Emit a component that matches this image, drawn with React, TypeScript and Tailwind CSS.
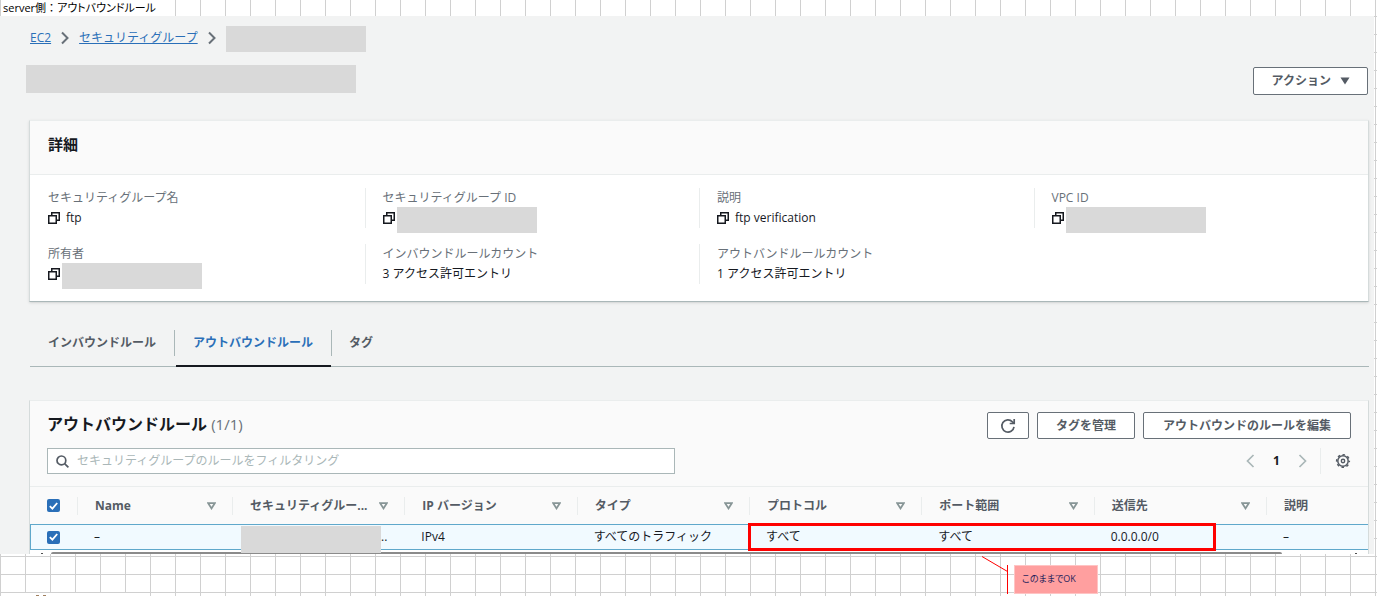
import type { ReactNode } from 'react';

type Detail = {
  label: string;
  value?: string;
  copyable?: boolean;
};

const details: Detail[] = [
  { label: 'セキュリティグループ名', value: 'ftp', copyable: true },
  { label: 'セキュリティグループ ID', copyable: true },
  { label: '説明', value: 'ftp verification', copyable: true },
  { label: 'VPC ID', copyable: true },
  { label: '所有者', copyable: true },
  { label: 'インバウンドルールカウント', value: '3 アクセス許可エントリ' },
  { label: 'アウトバンドルールカウント', value: '1 アクセス許可エントリ' },
];

const columns = [
  { title: 'Name', width: 'w-[155px]' },
  { title: 'セキュリティグルー...', width: '' },
  { title: 'IP バージョン', width: '' },
  { title: 'タイプ', width: '' },
  { title: 'プロトコル', width: '' },
  { title: 'ポート範囲', width: '' },
  { title: '送信先', width: '' },
];

function CopyIcon() {
  return (
    <svg width="12" height="12" viewBox="0 0 12 12" fill="none" stroke="#16191f" strokeWidth="1.5" aria-hidden="true">
      <path d="M.75 3.75h7.5v7.5H.75z" />
      <path d="M3.75 3.5V.75h7.5v7.5H8.5" />
    </svg>
  );
}

function BreadcrumbArrow() {
  return (
    <svg width="8" height="14" viewBox="0 0 8 14" fill="none" stroke="#687078" strokeWidth="2" aria-hidden="true">
      <path d="M1 1.5 6.5 7 1 12.5" />
    </svg>
  );
}

function SortIcon() {
  return (
    <svg width="9" height="8" viewBox="0 0 9 8" fill="none" stroke="#879596" strokeWidth="1.8" aria-hidden="true">
      <path d="M1.2 1.2h6.6L4.5 6.4z" />
    </svg>
  );
}

// Grey block drawn in place of a hidden value
function Redacted({ className = 'h-[26px] w-[140px]' }: { className?: string }) {
  return <span className={`block shrink-0 bg-[#d9d9d9] ${className}`} />;
}

function Checkbox({ label }: { label: string }) {
  return (
    <span className="grid size-[13px] place-items-center">
      <input
        type="checkbox"
        defaultChecked
        aria-label={label}
        className="col-start-1 row-start-1 size-[13px] appearance-none rounded-xs bg-[#2a6fb8]"
      />
      <svg
        className="pointer-events-none col-start-1 row-start-1"
        width="9"
        height="8"
        viewBox="0 0 9 8"
        fill="none"
        stroke="#fff"
        strokeWidth="1.8"
        aria-hidden="true"
      >
        <path d="M.8 4.2 3.4 6.6 8.2 1" />
      </svg>
    </span>
  );
}

function Button({ children, className = 'h-[27px]', label }: { children: ReactNode; className?: string; label?: string }) {
  return (
    <button
      type="button"
      aria-label={label}
      className={`flex items-center justify-center rounded-xs border border-[#687078] bg-white font-bold text-[#545b64] ${className}`}
    >
      {children}
    </button>
  );
}

function DetailsCard() {
  return (
    <section className="mt-[25px] border-x border-t border-b border-x-[#d5dbdb] border-t-[#eaeded] border-b-[#aab7b8] bg-white shadow-sm">
      <div className="flex h-[54px] items-center border-b border-[#eaeded] bg-[#fafafa] pr-4 pb-2 pl-[18px]">
        <h2 className="text-[15px] leading-6 font-bold">詳細</h2>
      </div>
      <dl className="grid grid-cols-4 gap-y-4 pt-[13px] pb-[17px]">
        {details.map((detail, index) => (
          <div
            key={detail.label}
            className={`h-10 border-l pl-[17px] leading-5 ${index % 4 === 0 ? 'border-transparent' : 'border-[#eaeded]'}`}
          >
            <dt className="text-[#687078]">{detail.label}</dt>
            <dd className="flex h-5 items-start">
              {detail.copyable && (
                <button type="button" aria-label={`${detail.label}をコピー`} className="mt-1 mr-0.5 shrink-0">
                  <CopyIcon />
                </button>
              )}
              {detail.value ? (
                <span className={detail.copyable ? 'pl-1' : ''}>{detail.value}</span>
              ) : (
                <Redacted className="-mt-px h-[26px] w-[140px]" />
              )}
            </dd>
          </div>
        ))}
      </dl>
    </section>
  );
}

function Tabs() {
  return (
    <div role="tablist" className="mt-[26px] ml-px flex h-[39px] items-end border-b border-[#aab7b8] font-bold text-[#545b64]">
      <button type="button" role="tab" aria-selected="false" className="mb-2.5 h-[26px] border-r border-[#aab7b8] px-[18px]">
        インバウンドルール
      </button>
      <button
        type="button"
        role="tab"
        aria-selected="true"
        className="-mb-px ml-px border-b-2 border-[#16191f] pb-[9px] text-[#2a6fb8]"
      >
        <span className="flex h-[26px] items-center pr-[18px] pl-[17px]">アウトバウンドルール</span>
      </button>
      <button type="button" role="tab" aria-selected="false" className="mb-2.5 h-[26px] border-l border-[#aab7b8] px-[17px]">
        タグ
      </button>
    </div>
  );
}

function RulesTable() {
  const cell = 'border-y border-[#5fa8cb] bg-[#f1faff] pl-[17px]';
  return (
    <table className="w-full table-fixed border-separate border-spacing-0 text-left whitespace-nowrap">
      <thead>
        <tr className="h-[38px] bg-[#fafafa] text-[#545b64]">
          <th className="w-[47px] border-t border-[#eaeded] pl-[17px]">
            <Checkbox label="すべて選択" />
          </th>
          {columns.map((column) => (
            <th key={column.title} className={`border-t border-[#eaeded] p-0 ${column.width}`}>
              <div className="flex h-[18px] items-center justify-between border-l border-[#eaeded] pr-4 pl-[17px]">
                <span>{column.title}</span>
                <button type="button" aria-label={`${column.title}で並べ替え`}>
                  <SortIcon />
                </button>
              </div>
            </th>
          ))}
          <th className="w-[102px] border-t border-[#eaeded] p-0">
            <div className="flex h-[18px] items-center border-l border-[#eaeded] pl-[17px]">説明</div>
          </th>
        </tr>
      </thead>
      <tbody>
        <tr className="h-[26px]">
          <td className="border-y border-l border-[#5fa8cb] bg-[#f1faff] pl-4">
            <Checkbox label="ルールを選択" />
          </td>
          <td className={cell}>–</td>
          <td className="relative border-y border-[#5fa8cb] bg-[#f1faff] pl-[149px]">
            <span className="absolute top-px left-[9px]">
              <Redacted className="h-[27px] w-[140px]" />
            </span>
            ..
          </td>
          <td className={cell}>IPv4</td>
          <td className={cell}>すべてのトラフィック</td>
          <td className={`relative ${cell}`}>
            すべて
            {/* Highlight around protocol, port range and destination */}
            <span className="pointer-events-none absolute -top-0.5 -left-px z-10 h-7 w-[468px] border-3 border-[#fe0000]" />
          </td>
          <td className={cell}>すべて</td>
          <td className={cell}>0.0.0.0/0</td>
          <td className={cell}>–</td>
        </tr>
      </tbody>
    </table>
  );
}

function RulesCard() {
  return (
    <section className="mt-[33px] border-x border-t border-x-[#d5dbdb] border-t-[#eaeded] bg-white">
      <div className="flex flex-col gap-[9px] bg-[#fafafa] pt-[11px] pr-[17px] pb-3 pl-[17px]">
        <div className="flex items-start justify-between">
          <h2 className="text-[16px] leading-6 font-bold">
            アウトバウンドルール <span className="text-[15px] font-normal text-[#687078]">(1/1)</span>
          </h2>
          <div className="flex gap-2">
            <Button label="更新" className="h-[27px] w-[42px]">
              <svg width="16" height="16" viewBox="0 0 16 16" fill="none" stroke="#545b64" strokeWidth="1.7" aria-hidden="true">
                <path d="M14 8.800A6.100 6.100 0 1 1 12.400 3.800L14 5.200" />
                <path d="M14.200 1v4.500H9.700" />
              </svg>
            </Button>
            <Button className="h-[27px] px-[18px]">タグを管理</Button>
            <Button className="h-[27px] px-[19px]">アウトバウンドのルールを編集</Button>
          </div>
        </div>
        <div className="flex items-center justify-between">
          <label className="flex h-[26px] w-[628px] items-center gap-2 border border-[#aab7b8] bg-white pl-2">
            <svg width="13" height="13" viewBox="0 0 13 13" fill="none" stroke="#545b64" strokeWidth="1.7" aria-hidden="true">
              <circle cx="5.4" cy="5.4" r="4.4" />
              <path d="m8.6 8.6 3.8 3.8" />
            </svg>
            <input
              type="text"
              aria-label="セキュリティグループのルールをフィルタリング"
              placeholder="セキュリティグループのルールをフィルタリング"
              className="min-w-0 flex-1 outline-none placeholder:text-[#aab7b8]"
            />
          </label>
          <div className="flex items-center">
            <button type="button" aria-label="前のページ">
              <svg width="9" height="14" viewBox="0 0 9 14" fill="none" stroke="#aab7b8" strokeWidth="1.7" aria-hidden="true">
                <path d="M7.5 1 1.5 7l6 6" />
              </svg>
            </button>
            <button type="button" className="w-[43px] text-center font-bold">
              1
            </button>
            <button type="button" aria-label="次のページ">
              <svg width="9" height="14" viewBox="0 0 9 14" fill="none" stroke="#aab7b8" strokeWidth="1.7" aria-hidden="true">
                <path d="m1.5 1 6 6-6 6" />
              </svg>
            </button>
            <button type="button" aria-label="設定" className="ml-[13px] flex h-[26px] items-center border-l border-[#eaeded] pl-3.5">
              <svg width="16" height="16" viewBox="0 0 16 16" fill="none" stroke="#545b64" aria-hidden="true">
                <circle cx="8" cy="8" r="5.2" strokeWidth="1.5" />
                <circle cx="8" cy="8" r="6.4" strokeWidth="1.4" strokeDasharray="2.51 2.516" strokeDashoffset="1.25" />
                <circle cx="8" cy="8" r="1.7" strokeWidth="1.4" />
              </svg>
            </button>
          </div>
        </div>
      </div>
      <RulesTable />
      {/* Horizontal scrollbar cut off at the edge of the panel */}
      <div className="flex h-1 items-end justify-between pr-[11px] pl-[11px]">
        <span className="h-px w-0.5 bg-[#505050]" />
        <span className="mr-[73px] ml-2 h-0.5 flex-1 rounded-t-xs bg-[#8b8b8b]" />
        <span className="h-px w-0.5 bg-[#505050]" />
      </div>
    </section>
  );
}

export default function App() {
  return (
    <div className="relative min-h-screen overflow-hidden bg-white bg-[linear-gradient(to_right,#d0d0d0_1px,transparent_1px),linear-gradient(to_bottom,#d0d0d0_1px,transparent_1px)] bg-[size:25px_18px] bg-[position:0_-2px] font-['Open_Sans','Noto_Sans_CJK_JP',sans-serif] text-xs text-[#16191f]">
      <div className="flex h-4 pl-px">
        <p className="w-[174px] bg-white pl-0.5 text-[11px] leading-[15px] whitespace-nowrap text-black">
          server側：
          <span className="[font-feature-settings:'palt']">アウトバウンドルール</span>
        </p>
      </div>

      <main className="mr-[3px] bg-[#f2f3f3] pt-2.5">
        <nav aria-label="パンくずリスト" className="flex h-[26px] items-center pb-0.5 pl-[30px] text-[#2a6fb8]">
          <a href="#ec2" className="underline">
            EC2
          </a>
          <span className="mx-2.5">
            <BreadcrumbArrow />
          </span>
          <a href="#security-groups" className="underline">
            セキュリティグループ
          </a>
          <span className="mx-2.5">
            <BreadcrumbArrow />
          </span>
          <Redacted className="-mb-0.5 h-[26px] w-[140px]" />
        </nav>

        <div className="mt-[13px] flex items-start justify-between pr-1.5 pl-[26px]">
          <Redacted className="h-7 w-[330px]" />
          <Button className="mt-0.5 h-7 gap-2 pr-4 pl-[18px]">
            アクション
            <svg width="12" height="8" viewBox="0 0 12 8" fill="#545b64" aria-hidden="true">
              <path d="M1.500.5h9L6 7.500z" />
            </svg>
          </Button>
        </div>

        <div className="pr-[5px] pl-[29px]">
          <DetailsCard />
          <Tabs />
          <RulesCard />
        </div>
      </main>

      {/* Next sheet row, only the top of its text is in view */}
      <div className="absolute top-[593px] left-px flex h-[3px] w-[149px] items-end gap-1 bg-white pl-[35px]">
        <span className="h-px w-[3px] bg-[#a08060]" />
        <span className="h-px w-[3px] bg-[#a08060]" />
      </div>

      <svg
        className="absolute top-[556px] left-[980px]"
        width="30"
        height="40"
        viewBox="0 0 30 40"
        fill="none"
        stroke="#fe0000"
        aria-hidden="true"
      >
        <path d="M2 .5 27.500 15.500M27.500 9v29" />
      </svg>
      <p className="absolute top-[565px] left-[1014px] h-[29px] w-[84px] border border-[#ffc4c4] bg-[#ff9f9f] pl-[7px] text-[9px] leading-[25px] whitespace-nowrap text-[#1f1f5c] [font-feature-settings:'palt']">
        このままでOK
      </p>
    </div>
  );
}
